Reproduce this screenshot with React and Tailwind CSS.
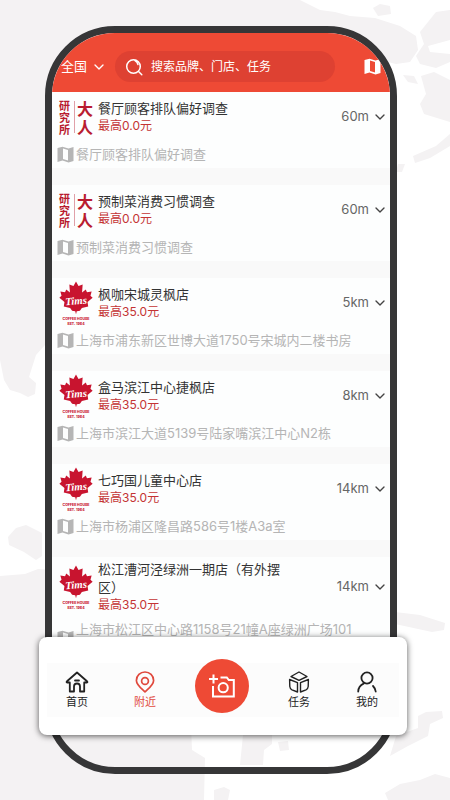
import React from 'react';
import { ChevronDown } from 'lucide-react';

const stores = [
  { logo: 'lab', name: '餐厅顾客排队偏好调查', price: '0.0', distance: '60m', address: '餐厅顾客排队偏好调查' },
  { logo: 'lab', name: '预制菜消费习惯调查', price: '0.0', distance: '60m', address: '预制菜消费习惯调查' },
  { logo: 'tims', name: '枫咖宋城灵枫店', price: '35.0', distance: '5km', address: '上海市浦东新区世博大道1750号宋城内二楼书房' },
  { logo: 'tims', name: '盒马滨江中心捷枫店', price: '35.0', distance: '8km', address: '上海市滨江大道5139号陆家嘴滨江中心N2栋' },
  { logo: 'tims', name: '七巧国儿童中心店', price: '35.0', distance: '14km', address: '上海市杨浦区隆昌路586号1楼A3a室' },
  { logo: 'tims', name: '松江漕河泾绿洲一期店（有外摆区）', price: '35.0', distance: '14km', address: '上海市松江区中心路1158号21幢A座绿洲广场101', tall: true },
];

function MapIcon({ className }) {
  return (
    <svg viewBox="0 0 17 17" className={className} fill="currentColor" aria-hidden="true">
      <path fillRule="evenodd" d="M0.5 2 5.5 0.8 11.5 2.6 16.5 1V15L11.5 16.4 5.5 14.6 0.5 16ZM6 2.6V13L11 14.5V4.1Z" />
    </svg>
  );
}

function LabLogo() {
  return (
    <div className="flex h-9 w-[34px] shrink-0 items-center justify-between font-['Noto_Sans_CJK_SC',sans-serif] font-bold text-[#b91c30]">
      <div className="w-3 text-[11px] leading-3">
        <div>研</div>
        <div>究</div>
        <div>所</div>
      </div>
      <div className="h-8 w-px bg-[#e0a0a8]" />
      <div className="w-4 text-base leading-[18px]">
        <div>大</div>
        <div>人</div>
      </div>
    </div>
  );
}

function TimsLogo() {
  return (
    <svg viewBox="0 0 34 45" className="h-11 w-[34px] shrink-0" role="img" aria-label="Tims">
      <path
        fill="#c8142f"
        d="M17 0.5 19.6 5 23.8 3.5 23.2 11.8 27 8.8 28.2 11.6 33 10.8 31.8 15 34 17.2 28.8 21.5 29.5 26 23 27.5 21 30.5 17.8 31 17 34 16.2 31 13 30.5 11 27.5 4.5 26 5.2 21.5 0 17.2 2.2 15 1 10.8 5.8 11.6 7 8.8 10.8 11.8 10.2 3.5 14.4 5Z"
      />
      <text x="17" y="24" fill="#fff" fontSize="11" fontWeight="700" fontStyle="italic" fontFamily="Liberation Serif, serif" textAnchor="middle" transform="rotate(-4 17 20)">Tims</text>
      <text x="17" y="40" fill="#c8142f" fontSize="3.6" fontWeight="800" fontFamily="Inter, sans-serif" textAnchor="middle">COFFEE HOUSE</text>
      <text x="17" y="44.5" fill="#c8142f" fontSize="3.6" fontWeight="800" fontFamily="Inter, sans-serif" textAnchor="middle">EST. 1964</text>
    </svg>
  );
}

function StoreCard({ store }) {
  return (
    <li className="bg-[#fdfefe] pr-0.5 pb-[5px] pl-[5px]">
      <div className="flex min-h-[50px] items-center py-[3px] pl-0.5">
        {store.logo === 'lab' ? <LabLogo /> : <TimsLogo />}
        <div className="ml-[5px] w-[186px]">
          <h2 className="text-[13px] leading-[18px] text-[#333]">{store.name}</h2>
          <p className="text-xs leading-[18px] text-[#c43434]">最高{store.price}元</p>
        </div>
        <button className="ml-auto flex items-center gap-[3px] text-[13px] text-[#666]">
          {store.distance}
          <ChevronDown className="size-4 text-[#444]" />
        </button>
      </div>
      <div className="mt-[3px] flex items-center gap-[2px] text-[#b5b5b5]">
        <MapIcon className="size-[17px] shrink-0" />
        <p className={store.tall ? 'h-9 text-[13px] leading-[18px]' : 'text-[13px] leading-[18px]'}>{store.address}</p>
      </div>
    </li>
  );
}

function HomeIcon() {
  return (
    <svg viewBox="0 0 24 24" className="size-6" fill="none" stroke="currentColor" strokeWidth="1.8" strokeLinejoin="round" strokeLinecap="round">
      <path d="M4.8 12.5H2.2Q1 12.3 2 11.3L12 2.5 22 11.3Q23 12.3 21.8 12.5H19.2V21.5H15V16.5A3 3 0 0 0 9 16.5V21.5H4.8ZM10 10.5H14" />
    </svg>
  );
}

function PinIcon() {
  return (
    <svg viewBox="0 0 24 24" className="size-6" fill="none" stroke="currentColor" strokeWidth="1.7" strokeLinejoin="round">
      <path d="M12 21.8C8 18 3.4 14.8 3.4 10.4A8.6 8.4 0 0 1 20.6 10.4C20.6 14.8 16 18 12 21.8Z" />
      <circle cx="12" cy="11" r="3.4" />
    </svg>
  );
}

function BoxIcon() {
  return (
    <svg viewBox="0 0 24 24" className="size-6" fill="none" stroke="currentColor" strokeWidth="1.4" strokeLinejoin="round">
      <path d="M12 2 20 6.5 12 10.3 4 6.5ZM2.6 9.5 10.5 12.6V22L5 19.8Q3 18.8 2.8 16.5ZM21.4 9.5 13.5 12.6V22L19 19.8Q21 18.8 21.2 16.5Z" />
    </svg>
  );
}

function UserIcon() {
  return (
    <svg viewBox="0 0 24 24" className="size-6" fill="none" stroke="currentColor" strokeWidth="1.8" strokeLinecap="round">
      <circle cx="12" cy="8" r="5.6" />
      <path d="M3.2 21.5C3.4 17.5 5.4 15 8.6 13.6M18 16C19.6 17.6 20.4 19.3 20.7 21.5" />
    </svg>
  );
}

function CameraIcon() {
  return (
    <svg viewBox="0 0 26 24" className="h-6 w-[26px]" fill="none" stroke="currentColor" strokeWidth="2">
      <path d="M4.5 0.5V9.5M0 5H9M4 12V22.5H24.8V6H19.8L17.8 3.5H11.5" />
      <circle cx="14.2" cy="13.7" r="4.6" />
    </svg>
  );
}

function TabItem({ icon, label, active }) {
  return (
    <button className={active ? 'flex w-[68px] shrink-0 flex-col items-center text-[#e0493d]' : 'flex w-[68px] shrink-0 flex-col items-center text-[#222]'}>
      {icon}
      <span className="text-[11px] leading-4">{label}</span>
    </button>
  );
}

// faint world map behind the phone
function Backdrop() {
  return (
    <svg viewBox="0 0 450 800" preserveAspectRatio="none" className="absolute inset-0 h-full w-full" fill="#f4f2f3" aria-hidden="true">
      <path d="M0 0H300L320 10 335 12 350 16 375 18 400 26 416 36 418 50 410 62 396 64 380 60V300H45V345L36 355 29 377 36 383 35 394 28 397 20 393 10 390 4 380 0 360Z" />
      <path d="M8 537 16 528 26 525 42 533 42 556 36 560 24 552 9 545Z" />
      <path d="M0 576 25 574 38 569 60 570V700H190L192 750 205 758 204 800H0Z" />
      <path d="M373 8 380 4 390 6 391 14 378 16ZM450 10 436 12 420 32 424 44 416 56 420 64 436 68 450 62V54L430 52 428 46 450 40ZM403 75 414 76 418 84 408 82ZM421 76 434 72 450 80V122L424 114 420 104 426 94ZM413 156 436 146 450 134V146L430 158 415 163ZM398 164 405 164 402 172 396 172Z" />
      <path d="M395 612 420 615 445 623 444 630 432 632 395 624ZM418 716 426 712 442 711 443 718 430 724 428 736 408 746 390 756 396 736 418 728ZM243 735H272V744L264 750 263 765H240ZM278 742 288 741 289 750 280 751ZM214 790 224 787 230 790 228 800H214ZM385 793 400 784 420 780 435 774 450 778V800H388Z" />
    </svg>
  );
}

export default function App() {
  return (
    <div className="relative flex h-screen flex-col overflow-hidden bg-white py-[26px] pr-[53px] pl-[45px] font-['Inter','Noto_Sans_CJK_SC',sans-serif]">
      <Backdrop />
      <div className="relative flex min-h-0 flex-1 flex-col">
        <main className="flex min-h-0 flex-1 flex-col overflow-hidden rounded-[70px] border-[7px] border-[#363637]">
          <header className="flex items-center bg-[#ee4a35] px-[9px] pt-[18px] pb-2.5 text-white">
            <button className="flex items-center gap-1 text-[13px]">
              全国
              <ChevronDown className="size-4" />
            </button>
            <label className="ml-2 flex h-[31px] w-[220px] items-center gap-2 rounded-full bg-[#de4132] pl-2.5">
              <svg viewBox="0 0 18 18" className="size-[18px] shrink-0" fill="none" stroke="currentColor" strokeWidth="1.5" strokeLinecap="round">
                <circle cx="8.5" cy="8.5" r="6.8" />
                <path d="M10 2.5Q12.5 4 13 6.5M13.8 13.8 16.8 16.8" />
              </svg>
              <input type="search" aria-label="搜索" placeholder="搜索品牌、门店、任务" className="w-full min-w-0 bg-transparent text-xs outline-none placeholder:text-white" />
            </label>
            <button className="ml-auto" aria-label="地图">
              <MapIcon className="size-[17px]" />
            </button>
          </header>
          <ul className="mb-[50px] flex min-h-0 flex-1 flex-col gap-[17px] overflow-hidden bg-[#f9f9f9]">
            {stores.map((store) => (
              <StoreCard key={store.name} store={store} />
            ))}
          </ul>
        </main>
        <nav className="absolute -right-2.5 bottom-[39px] -left-1.5 flex h-[98px] flex-col justify-center rounded-lg bg-white px-2 pt-2 shadow-[0_1px_6px_rgba(0,0,0,0.65)]">
          <div className="flex h-[54px] items-center justify-center bg-[#fcfcfc] pr-0.5">
            <TabItem icon={<HomeIcon />} label="首页" />
            <TabItem icon={<PinIcon />} label="附近" active />
            <button aria-label="拍照" className="mx-4 mb-2 flex size-[54px] shrink-0 items-center justify-center rounded-full bg-[#ee4a35] text-white">
              <CameraIcon />
            </button>
            <TabItem icon={<BoxIcon />} label="任务" />
            <TabItem icon={<UserIcon />} label="我的" />
          </div>
        </nav>
      </div>
    </div>
  );
}
